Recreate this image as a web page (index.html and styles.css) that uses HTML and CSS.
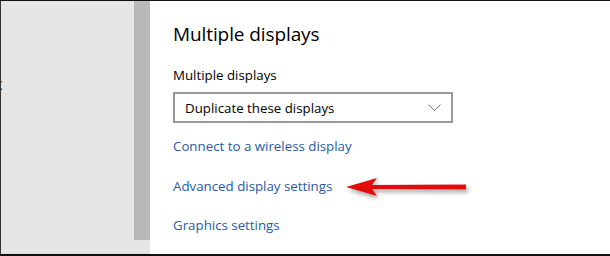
FILE: index.html
```html
<!DOCTYPE html>
<html>
<head>
<meta charset="utf-8">
<link rel="stylesheet" href="styles.css">
</head>
<body>
<div class="frame">
  <aside class="sidebar">
    <div class="nav">
      <span class="cut">c</span>
    </div>
    <div class="scroll"></div>
  </aside>
  <main class="content">
    <h1 class="title">Multiple displays</h1>
    <div class="label">Multiple displays</div>
    <div class="select">
      <span>Duplicate these displays</span>
      <svg class="chev" width="13" height="7" viewBox="0 0 13 7"><path d="M0.5 0.5 L6.5 6.5 L12.5 0.5" fill="none" stroke="#777" stroke-width="1"/></svg>
    </div>
    <a class="link">Connect to a wireless display</a>
    <div class="row">
      <a class="link">Advanced display settings</a>
      <svg class="arrow" width="128" height="28" viewBox="0 0 128 28">
        <defs>
          <filter id="sh" x="-10%" y="-50%" width="130%" height="220%">
            <feDropShadow dx="2" dy="3" stdDeviation="2" flood-color="#000" flood-opacity="0.35"/>
          </filter>
        </defs>
        <g filter="url(#sh)">
          <path d="M2 12 L33 3 L28 10 L122 9.5 L122 14.5 L28 14 L33 21 Z" fill="#e01010"/>
        </g>
      </svg>
    </div>
    <a class="link">Graphics settings</a>
  </main>
</div>
</body>
</html>
```

FILE: styles.css
```css
html, body {
  margin: 0;
  padding: 0;
  background: #fff;
}
.frame {
  width: 610px;
  height: 256px;
  box-sizing: border-box;
  border-top: 1px solid #111;
  border-bottom: 2px solid #111;
  border-left: 1px solid #333;
  display: flex;
  overflow: hidden;
  font-family: "Open Sans", "Noto Sans", sans-serif;
}
.sidebar {
  width: 149px;
  flex: none;
  background: #e6e6e6;
  display: flex;
  border-bottom: 1px solid #dcdcdc;
}
.nav {
  width: 133px;
  position: relative;
  overflow: hidden;
}
.cut {
  position: absolute;
  left: -6px;
  top: 72px;
  font-size: 16px;
  color: #222;
}
.scroll {
  width: 16px;
  height: 239px;
  background: #b9b9b9;
}
.content {
  flex: 1;
  padding: 20px 0 0 23px;
  color: #000;
}
.title {
  margin: 0;
  font-weight: 400;
  font-size: 19px;
  line-height: 26px;
  letter-spacing: -0.1px;
}
.label {
  margin-top: 19px;
  font-size: 13.3px;
  line-height: 18px;
}
.select {
  margin-top: 8px;
  width: 280px;
  height: 31px;
  box-sizing: border-box;
  border: 2px solid #999;
  display: flex;
  align-items: center;
  justify-content: space-between;
  padding: 0 10px 0 10px;
  font-size: 13.3px;
}
.link {
  display: block;
  color: #2a5aa5;
  font-size: 13.3px;
  line-height: 18px;
  margin-top: 14px;
}
.row {
  display: flex;
  align-items: center;
  height: 18px;
  margin-top: 22px;
}
.row .link {
  margin-top: 0;
}
.arrow {
  margin-left: 12px;
  margin-top: 6px;
  flex: none;
}
.row + .link {
  margin-top: 21px;
}
```
